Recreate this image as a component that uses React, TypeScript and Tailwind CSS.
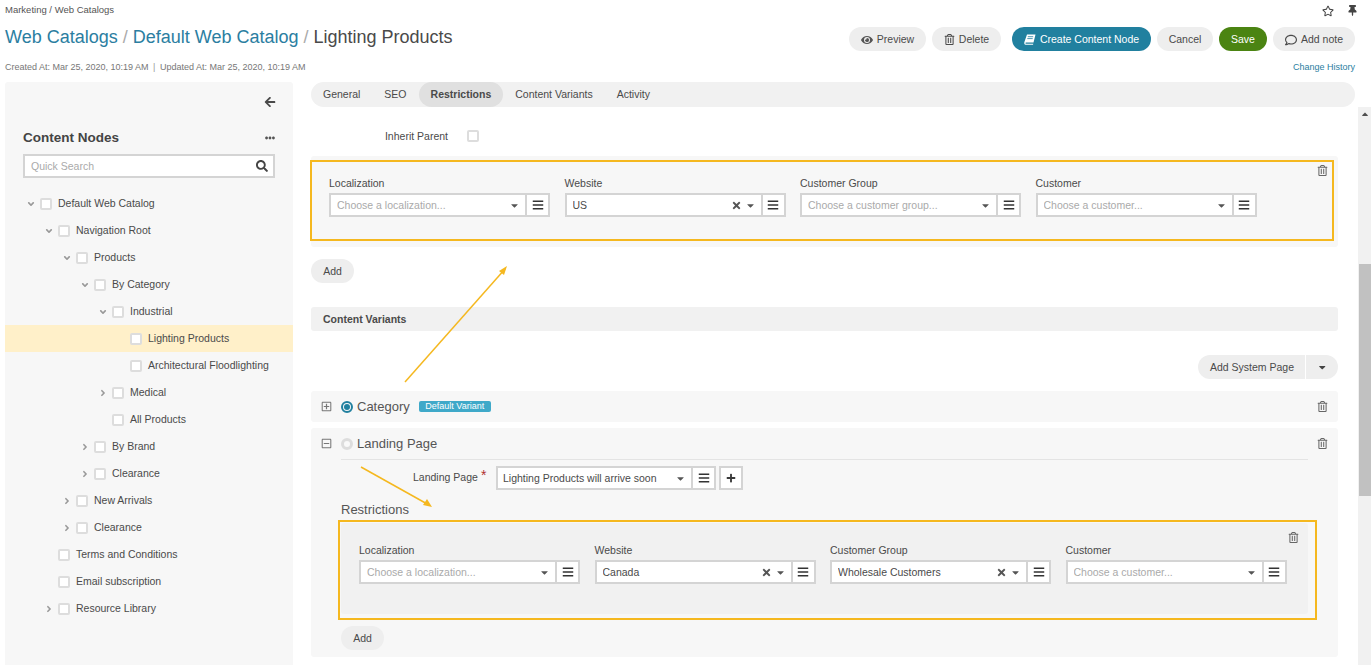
import React from "react";
import {
  FaRegStar, FaThumbtack, FaEye, FaRegTrashAlt, FaRegComment, FaArrowLeft, FaEllipsisH, FaSearch,
  FaAngleDown, FaAngleRight, FaCaretDown, FaBars, FaTimes, FaPlus, FaRegPlusSquare, FaRegMinusSquare, FaCaretUp,
} from "react-icons/fa";

function Btn({ children, className = "" }: { children: React.ReactNode; className?: string }) {
  return (
    <button className={`h-6 rounded-full bg-[#eeeeee] text-[#4a4a4a] text-[10.5px] flex items-center justify-center gap-1 pt-[1px] ${className}`}>
      {children}
    </button>
  );
}

function Combo({ width, value, placeholder, clear }: { width: number; value?: string; placeholder?: string; clear?: boolean }) {
  return (
    <div className="flex h-6 text-[10.5px]">
      <div style={{ width }} className="h-6 border-2 border-[#d4d4d4] bg-white flex items-center pl-[6px] pr-[5px]">
        <span className={`flex-1 truncate pt-[1px] ${value ? "text-[#4a4a4a]" : "text-[#aaaaaa]"}`}>{value ?? placeholder}</span>
        {clear && <FaTimes className="text-[#555555] text-[11px] mr-[3px]" />}
        <FaCaretDown className="text-[#555555] text-[11px]" />
      </div>
      <Bars />
    </div>
  );
}

function Bars() {
  return (
    <div className="w-[23px] h-6 border-2 border-l-0 border-[#d4d4d4] bg-white flex items-center justify-center">
      <FaBars className="text-[#333333] text-[12px]" />
    </div>
  );
}

type F = { label: string; width: number; value?: string; placeholder?: string; clear?: boolean };

function Fields({ items }: { items: F[] }) {
  return (
    <div className="flex pl-[18px] pt-5">
      {items.map((f) => (
        <div key={f.label} className="w-[235.5px] shrink-0">
          <div className="h-[14px] mb-[3px] text-[10.5px] leading-[14px] text-[#4a4a4a]">{f.label}</div>
          <Combo width={f.width} value={f.value} placeholder={f.placeholder} clear={f.clear} />
        </div>
      ))}
    </div>
  );
}

type Row = { t: string; l: number; c?: "d" | "r"; sel?: boolean };
const rows: Row[] = [
  { t: "Default Web Catalog", l: 0, c: "d" },
  { t: "Navigation Root", l: 1, c: "d" },
  { t: "Products", l: 2, c: "d" },
  { t: "By Category", l: 3, c: "d" },
  { t: "Industrial", l: 4, c: "d" },
  { t: "Lighting Products", l: 5, sel: true },
  { t: "Architectural Floodlighting", l: 5 },
  { t: "Medical", l: 4, c: "r" },
  { t: "All Products", l: 4 },
  { t: "By Brand", l: 3, c: "r" },
  { t: "Clearance", l: 3, c: "r" },
  { t: "New Arrivals", l: 2, c: "r" },
  { t: "Clearance", l: 2, c: "r" },
  { t: "Terms and Conditions", l: 1 },
  { t: "Email subscription", l: 1 },
  { t: "Resource Library", l: 1, c: "r" },
];

function Check({ className = "" }: { className?: string }) {
  return <span className={`block w-[12px] h-[12px] shrink-0 border-2 border-[#dddddd] bg-white rounded-[2px] ${className}`} />;
}

function Tree() {
  return (
    <div className="mt-3">
      {rows.map((r, i) => (
        <div key={i} className={`h-[27px] flex items-center text-[10.5px] text-[#4a4a4a] ${r.sel ? "bg-[#fff0c9]" : ""}`}>
          <span style={{ width: 31 + r.l * 18 }} className="shrink-0 flex justify-end text-[#999999] text-[10px]">
            {r.c === "d" && <FaAngleDown />}
            {r.c === "r" && <FaAngleRight />}
          </span>
          <Check className="ml-[4px] mr-[6px]" />
          <span>{r.t}</span>
        </div>
      ))}
    </div>
  );
}

function Sidebar() {
  return (
    <aside className="w-[288px] h-[583px] shrink-0 bg-[#f7f7f7] rounded-t-[3px]">
      <div className="h-[40px] flex items-center justify-end pr-[17px] text-[#4a4a4a] text-[12px]">
        <FaArrowLeft />
      </div>
      <div className="pl-[18px] pr-[18px]">
        <div className="h-[30px] mt-[1px] flex items-center justify-between text-[13.5px] font-bold text-[#444444]">
          <span>Content Nodes</span>
          <FaEllipsisH className="text-[10px] text-[#555555]" />
        </div>
        <div className="mt-[1px] h-6 border-2 border-[#d4d4d4] bg-white flex items-center pl-[6px] pr-[5px] text-[10.5px] text-[#aaaaaa]">
          <span className="flex-1 pt-[1px]">Quick Search</span>
          <FaSearch className="text-[12px] text-[#444444]" />
        </div>
      </div>
      <Tree />
    </aside>
  );
}

const topFields: F[] = [
  { label: "Localization", width: 198, placeholder: "Choose a localization..." },
  { label: "Website", width: 198, value: "US", clear: true },
  { label: "Customer Group", width: 198, placeholder: "Choose a customer group..." },
  { label: "Customer", width: 198, placeholder: "Choose a customer..." },
];
const innerFields: F[] = [
  { label: "Localization", width: 198, placeholder: "Choose a localization..." },
  { label: "Website", width: 198, value: "Canada", clear: true },
  { label: "Customer Group", width: 198, value: "Wholesale Customers", clear: true },
  { label: "Customer", width: 198, placeholder: "Choose a customer..." },
];

function Trash({ className = "" }: { className?: string }) {
  return <FaRegTrashAlt className={`text-[#666666] text-[11px] ${className}`} />;
}

function BookIcon() {
  return (
    <svg width="12" height="11" viewBox="0 0 12 11">
      <path d="M3 .5H11.5L9.5 8.5H2C1.2 8.5 1.2 9.8 2 9.8H9.3L9 10.7H1.6C.3 10.7 0 9.3.4 8Z" fill="#ffffff" />
      <path d="M3.8 2.7H9.2M3.3 4.6H8.7" stroke="#21809f" strokeWidth=".8" />
    </svg>
  );
}

function Main() {
  return (
    <div className="flex-1 min-w-0">
      <div className="w-[1044px] h-[25px] bg-[#f1f1f1] rounded-full flex items-center text-[10.5px] text-[#4a4a4a]">
        <span className="px-3">General</span>
        <span className="px-3">SEO</span>
        <span className="px-3 h-[25px] rounded-full bg-[#e0e0e0] font-bold flex items-center">Restrictions</span>
        <span className="px-3">Content Variants</span>
        <span className="px-3">Activity</span>
      </div>
      <div className="flex h-[558px]">
        <div className="w-[1027px] shrink-0">
          <div className="mt-[18px] h-[22px] flex items-center text-[10.5px] text-[#4a4a4a]">
            <span className="w-[137px] text-right pt-[1px]">Inherit Parent</span>
            <Check className="ml-[19px]" />
          </div>
          <div className="relative mt-[9px] h-[91px] bg-[#f7f7f7] rounded-[3px]">
            <Fields items={topFields} />
            <Trash className="absolute right-[10px] top-[9px]" />
            <div className="absolute left-[-1px] top-1 w-[1024px] h-[81px] border-2 border-[#f5b81f]" />
          </div>
          <Btn className="mt-3 w-[43px]">Add</Btn>
          <div className="mt-6 h-6 bg-[#f1f1f1] rounded-[3px] pl-3 pt-[1px] flex items-center text-[10.5px] font-bold text-[#4a4a4a]">
            Content Variants
          </div>
          <div className="mt-6 flex justify-end">
            <div className="flex h-6 w-[140px] rounded-full bg-[#eeeeee] text-[10.5px] text-[#4a4a4a] items-center">
              <span className="w-[108px] pl-3 pt-[1px] border-r border-white h-6 flex items-center">Add System Page</span>
              <span className="flex-1 flex justify-center"><FaCaretDown className="text-[#444444]" /></span>
            </div>
          </div>
          <div className="mt-3 h-[31px] bg-[#f7f7f7] rounded-[3px] flex items-center text-[#555555]">
            <FaRegPlusSquare className="ml-[10px] text-[11px] text-[#777777]" />
            <span className="ml-[9px] w-[12px] h-[12px] rounded-full border-2 border-[#21809f] flex items-center justify-center">
              <span className="block w-[6px] h-[6px] rounded-full bg-[#21809f]" />
            </span>
            <span className="ml-[4px] text-[13px]">Category</span>
            <span className="ml-[9px] h-[11px] w-[72px] rounded-[2px] bg-[#3fa9c9] text-white text-[9px] leading-[11px] text-center">Default Variant</span>
            <Trash className="ml-auto mr-[10px]" />
          </div>
          <div className="mt-[6px] h-[229px] bg-[#f7f7f7] rounded-[3px]">
            <div className="h-[31px] flex items-center text-[#555555]">
              <FaRegMinusSquare className="ml-[10px] text-[11px] text-[#777777]" />
              <span className="ml-[9px] w-[12px] h-[12px] rounded-full border-[3px] border-[#dddddd] bg-[#f9f9f9]" />
              <span className="ml-[4px] text-[13px]">Landing Page</span>
              <Trash className="ml-auto mr-[10px]" />
            </div>
            <div className="ml-[30px] w-[967px] border-t border-[#e4e4e4]" />
            <div className="mt-[6px] flex items-center text-[10.5px] text-[#4a4a4a]">
              <span className="ml-[102px] w-[65px] whitespace-nowrap">Landing Page</span>
              <span className="ml-[3px] w-[15px] text-[#b03030] text-[14px] h-6 leading-[18px]">*</span>
              <div className="flex">
                <div className="w-[197px] h-6 border-2 border-[#d4d4d4] bg-white flex items-center pl-[5px] pr-[5px]">
                  <span className="flex-1 whitespace-nowrap pt-[1px]">Lighting Products will arrive soon</span>
                  <FaCaretDown className="text-[#555555] text-[11px]" />
                </div>
                <Bars />
                <div className="ml-[3px] w-6 h-6 border-2 border-[#d4d4d4] bg-white flex items-center justify-center">
                  <FaPlus className="text-[#3a3a3a] text-[10px]" />
                </div>
              </div>
            </div>
            <div className="mt-[12px] ml-[30px] h-4 text-[13px] leading-4 text-[#555555]">Restrictions</div>
            <div className="relative mt-[5px] ml-[30px] w-[967px] h-[91px] bg-[#f1f1f1] rounded-[3px]">
              <Fields items={innerFields} />
              <Trash className="absolute right-[9px] top-[9px]" />
              <div className="absolute left-[-3px] top-[-3px] w-[979px] h-[100px] border-2 border-[#f5b81f]" />
            </div>
            <Btn className="mt-3 ml-[30px] w-[43px]">Add</Btn>
          </div>
        </div>
        <div className="ml-auto w-[13px] bg-[#f1f1f1] flex flex-col items-center">
          <FaCaretUp className="text-[10px] text-[#505050] mt-[2px]" />
          <div className="mt-[145px] w-[12px] h-[232px] bg-[#c1c1c1]" />
        </div>
      </div>
    </div>
  );
}

export default function App() {
  return (
    <div className="relative w-[1371px] h-[665px] overflow-hidden bg-white font-['Liberation_Sans',Arial,sans-serif]">
      <header className="relative h-[82px] px-[5px]">
        <div className="flex items-center justify-between h-[21px] pr-[8px]">
          <span className="text-[9.5px] text-[#555555]">Marketing / Web Catalogs</span>
          <span className="flex items-center gap-[13px] text-[12px] text-[#444444]">
            <FaRegStar />
            <FaThumbtack className="text-[11px]" />
          </span>
        </div>
        <div className="mt-[6px] h-6 flex items-center pr-[11px]">
          <h1 className="text-[18px] font-normal text-[#4a4a4a] flex-1 pb-[3px]">
            <span className="text-[#2b7ea1]">Web Catalogs</span>
            <span className="text-[#aaaaaa]"> / </span>
            <span className="text-[#2b7ea1]">Default Web Catalog</span>
            <span className="text-[#aaaaaa]"> / </span>
            <span>Lighting Products</span>
          </h1>
          <div className="flex items-center">
            <Btn className="w-[77px]"><FaEye className="text-[12px] text-[#555555]" />Preview</Btn>
            <Btn className="w-[69px] ml-[6px]"><FaRegTrashAlt className="text-[11px]" />Delete</Btn>
            <Btn className="w-[139px] ml-[11px] !bg-[#21809f] !text-white"><BookIcon />Create Content Node</Btn>
            <Btn className="w-[56px] ml-[6px]">Cancel</Btn>
            <Btn className="w-[48px] ml-[6px] !bg-[#4b8412] !text-white">Save</Btn>
            <Btn className="w-[82px] ml-[6px]"><FaRegComment className="text-[12px]" />Add note</Btn>
          </div>
        </div>
        <div className="mt-[10px] flex items-center justify-between pr-[11px] text-[9px] text-[#777777]">
          <span>Created At: Mar 25, 2020, 10:19 AM <span className="mx-[2px] text-[#999999]">|</span> Updated At: Mar 25, 2020, 10:19 AM</span>
          <span className="text-[#2b7ea1]">Change History</span>
        </div>
      </header>
      <div className="flex pl-[5px]">
        <Sidebar />
        <div className="w-[18px] shrink-0" />
        <Main />
      </div>
      <svg className="absolute inset-0 pointer-events-none" width="1371" height="665">
        <g stroke="#f5b81f" strokeWidth="1.5" fill="#f5b81f">
          <line x1="405" y1="382" x2="505" y2="269" />
          <polygon points="507,266 499,271 504,275" stroke="none" />
          <line x1="361" y1="467" x2="429" y2="505" />
          <polygon points="432,507 423,505 427,499" stroke="none" />
        </g>
      </svg>
    </div>
  );
}
